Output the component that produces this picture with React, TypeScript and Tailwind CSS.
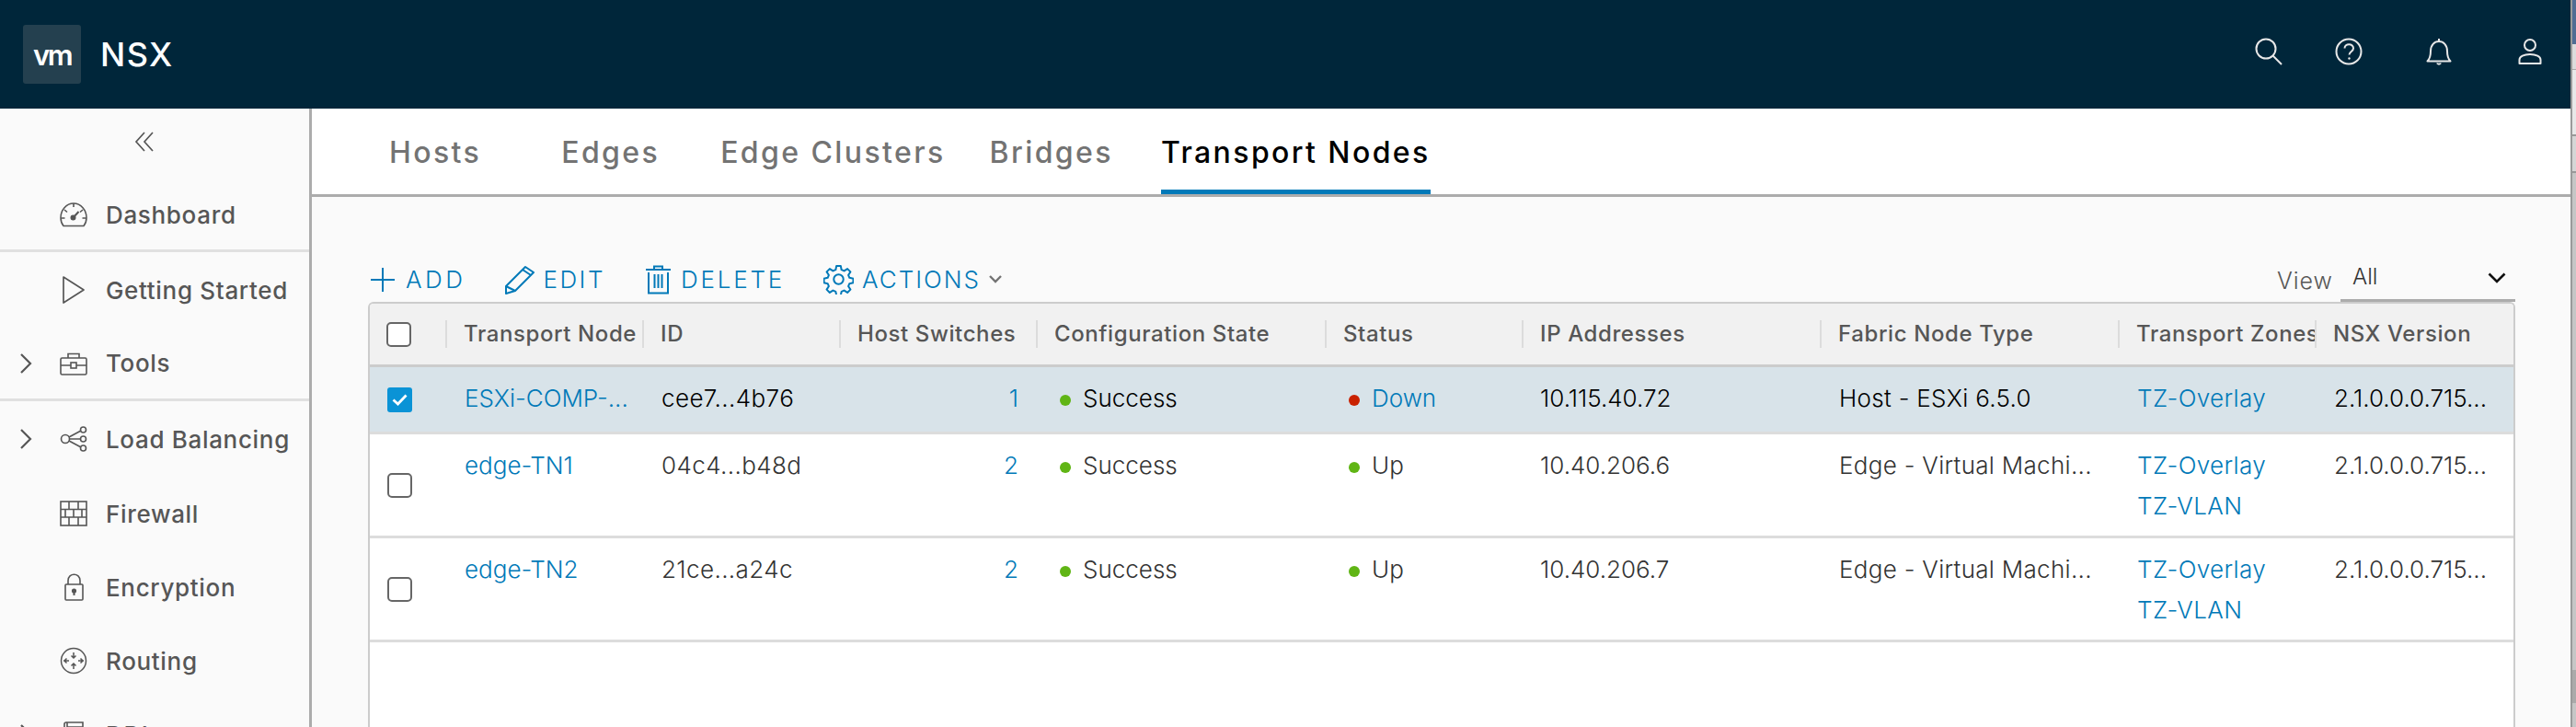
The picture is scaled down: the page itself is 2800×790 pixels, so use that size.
import React from 'react';

const gridCols = 'grid grid-cols-[82px_214px_214px_214px_314px_214px_324px_324px_214px_1fr]';

function Gauge() {
  return (
    <svg width="30" height="28" viewBox="0 0 30 28" fill="none" stroke="#565656" strokeWidth="1.6">
      <path d="M4 26.5C2 24 1 21 1 17.5 1 9.5 7 2 15 2s14 7.500 14 15.500c0 3.500-1 6.500-3 9z" />
      <path d="M15 2v4M5 9l3 2.500M25 9l-3 2.500M1.500 18h4M28.500 18h-4" />
      <circle cx="14.500" cy="17.500" r="2.200" fill="#565656" />
      <path d="M15 17l5.500-6" strokeWidth="2" />
    </svg>
  );
}

function Play() {
  return (
    <svg width="26" height="32" viewBox="0 0 26 32" fill="none" stroke="#565656" strokeWidth="1.700" strokeLinejoin="round">
      <path d="M2 2l22 14L2 30z" />
    </svg>
  );
}

function Toolbox() {
  return (
    <svg width="30" height="26" viewBox="0 0 30 26" fill="none" stroke="#565656" strokeWidth="1.600">
      <rect x="1" y="7" width="28" height="18" rx="1.500" />
      <path d="M9 7V2.500h12V7M1 15h11M18 15h11" />
      <rect x="12" y="12" width="6" height="6" />
    </svg>
  );
}

function Balancer() {
  return (
    <svg width="30" height="28" viewBox="0 0 30 28" fill="none" stroke="#565656" strokeWidth="1.600">
      <circle cx="25.500" cy="4" r="3" />
      <circle cx="25.500" cy="14" r="3" />
      <circle cx="25.500" cy="24" r="3" />
      <circle cx="6" cy="14" r="4.500" />
      <path d="M10 12l13-7M10.500 14h12M10 16l13 7" />
    </svg>
  );
}

function Wall() {
  return (
    <svg width="30" height="28" viewBox="0 0 30 28" fill="none" stroke="#565656" strokeWidth="1.600">
      <rect x="1" y="1" width="28" height="26" />
      <path d="M1 9.500h28M1 18h28M10 1v8.500M20 1v8.500M6 9.500V18M15 9.500V18M24 9.500V18M10 18v9M20 18v9" />
    </svg>
  );
}

function Lock() {
  return (
    <svg width="24" height="30" viewBox="0 0 24 30" fill="none" stroke="#565656" strokeWidth="1.600">
      <rect x="3" y="12" width="19" height="17" rx="1" />
      <path d="M6 12V8c0-9 13-9 13 0v4" />
      <circle cx="12.500" cy="19" r="1.800" fill="#565656" />
      <path d="M12.500 20v4" strokeWidth="2" />
    </svg>
  );
}

function RouterIcon() {
  return (
    <svg width="30" height="30" viewBox="0 0 30 30" fill="none" stroke="#565656" strokeWidth="1.500">
      <circle cx="15" cy="15" r="13.500" />
      <path d="M15 6v6M12.500 9.500l2.500 2.500 2.500-2.500M15 24v-6M12.500 20.500l2.500-2.500 2.500 2.500M4 15h6M7.500 12.500L5 15l2.500 2.500M26 15h-6M22.500 12.500L25 15l-2.500 2.500" />
    </svg>
  );
}

function Scroll() {
  return (
    <svg width="24" height="28" viewBox="0 0 24 28" fill="none" stroke="#565656" strokeWidth="1.600">
      <path d="M2 7V3c0-1 1-2 2-2h18v5M5 1v24h17V6H5" />
    </svg>
  );
}

function Caret() {
  return (
    <svg width="14" height="24" viewBox="0 0 14 24" fill="none" stroke="#565656" strokeWidth="2.200">
      <path d="M2 2l10 10L2 22" />
    </svg>
  );
}

function NavItem({ label, icon, caret, className }: { label: string; icon: React.ReactNode; caret?: boolean; className: string }) {
  return (
    <div className={`flex shrink-0 items-center ${className}`}>
      <div className="flex w-[62px] shrink-0 justify-center pr-[6px]">{caret && <Caret />}</div>
      <div className="flex w-[36px] shrink-0 justify-center">{icon}</div>
      <span className="ml-[17px] whitespace-nowrap text-[26px] font-medium tracking-[0.67px] text-[#565656]">{label}</span>
    </div>
  );
}

function Sidebar() {
  return (
    <aside className="flex w-[339px] shrink-0 flex-col overflow-hidden border-r-[3px] border-[#acacac] bg-[#fafafa]">
      <div className="flex h-[77px] shrink-0 justify-center pt-[25px]">
        <svg className="mr-[22px]" width="22" height="22" viewBox="0 0 22 22" fill="none" stroke="#565656" strokeWidth="1.700">
          <path d="M11 1L2 11l9 10M20 1l-9 10 9 10" />
        </svg>
      </div>
      <NavItem label="Dashboard" icon={<Gauge />} className="h-[79px] border-b-[3px] border-[#e0e0e0]" />
      <NavItem label="Getting Started" icon={<Play />} className="h-[82px]" />
      <NavItem label="Tools" icon={<Toolbox />} caret className="h-[80px] border-b-[3px] border-[#e0e0e0]" />
      <NavItem label="Load Balancing" icon={<Balancer />} caret className="h-[82px]" />
      <NavItem label="Firewall" icon={<Wall />} className="h-[80px]" />
      <NavItem label="Encryption" icon={<Lock />} className="h-[80px]" />
      <NavItem label="Routing" icon={<RouterIcon />} className="h-[80px]" />
      <NavItem label="DDI" icon={<Scroll />} caret className="h-[80px]" />
    </aside>
  );
}

function TopBar() {
  return (
    <header className="flex h-[118px] shrink-0 items-center bg-[#00263a] pl-[25px] pr-[31px] text-[#e8e8e8]">
      <div className="flex h-[64px] w-[63px] items-center justify-center rounded-[3px] bg-[#24404f]">
        <span className="text-[31px] font-semibold leading-none tracking-[-2.5px] text-white">vm</span>
      </div>
      <span className="ml-[21px] text-[36px] font-medium tracking-[1.500px] text-white">NSX</span>
      <div className="mb-[6px] ml-auto flex items-center">
        <svg width="30" height="30" viewBox="0 0 30 30" fill="none" stroke="#e8e8e8" strokeWidth="2">
          <circle cx="12" cy="12" r="10.500" />
          <path d="M19.500 19.500L29 29" />
        </svg>
        <svg className="ml-[57px]" width="30" height="30" viewBox="0 0 30 30" fill="none" stroke="#e8e8e8" strokeWidth="2">
          <circle cx="15" cy="15" r="13.500" />
          <path d="M10.500 11.500c0-6 9.500-5.500 9.500 0 0 3.500-4.500 3.500-4.500 7" />
          <circle cx="15.500" cy="22.500" r="1.200" fill="#e8e8e8" stroke="none" />
        </svg>
        <svg className="ml-[69px]" width="28" height="30" viewBox="0 0 28 30" fill="none" stroke="#e8e8e8" strokeWidth="2">
          <path d="M1.500 25.500c3.500-3.500 3.500-7 3.500-11C5 8 9 4 14 4s9 4 9 10.500c0 4 0 7.500 3.500 11z" strokeLinejoin="round" />
          <path d="M14 1v3M12 27.500c.5 1.500 3.500 1.500 4 0" />
        </svg>
        <svg className="ml-[72px]" width="26" height="30" viewBox="0 0 26 30" fill="none" stroke="#e8e8e8" strokeWidth="2">
          <circle cx="13" cy="8" r="6" />
          <path d="M1.500 28v-4c0-3.500 5-6 11.500-6s11.500 2.500 11.500 6v4z" strokeLinejoin="round" />
        </svg>
      </div>
    </header>
  );
}

function Tabs() {
  const tabClass = 'whitespace-nowrap pt-[3px] text-[32px] font-medium tracking-[2.400px] text-[#737373]';
  return (
    <nav className="flex h-[96px] shrink-0 items-center border-b-[3px] border-[#acacac] bg-white pl-[84px]">
      <span className={tabClass}>Hosts</span>
      <span className={`ml-[87px] ${tabClass}`}>Edges</span>
      <span className={`ml-[66px] ${tabClass}`}>Edge Clusters</span>
      <span className={`ml-[48px] ${tabClass}`}>Bridges</span>
      <span className="ml-[52px] flex h-full items-center whitespace-nowrap border-b-[5px] border-[#0079b8] pt-[8px] text-[32px] font-medium tracking-[2.400px] text-black">
        Transport Nodes
      </span>
    </nav>
  );
}

function Toolbar() {
  const actionClass = 'flex items-center whitespace-nowrap text-[26px] font-light text-[#0079b8]';
  return (
    <div className="flex h-[114px] shrink-0 items-end pr-[60px]">
      <div className="flex flex-1 items-center pb-[5px] pl-[63px]">
        <div className={`${actionClass} tracking-[3.500px]`}>
          <svg className="mr-[11px]" width="28" height="28" viewBox="0 0 28 28" stroke="#0079b8" strokeWidth="2">
            <path d="M14 1v26M1 14h26" />
          </svg>
          ADD
        </div>
        <div className={`ml-[42px] ${actionClass} tracking-[2.500px]`}>
          <svg className="mr-[8px]" width="34" height="32" viewBox="0 0 34 32" fill="none" stroke="#0079b8" strokeWidth="2">
            <path d="M2 23L23 2l9 6-20 20-10 3zM20 5l9 6M2 23l10 5" strokeLinejoin="round" />
          </svg>
          EDIT
        </div>
        <div className={`ml-[43px] ${actionClass} tracking-[2.800px]`}>
          <svg className="mr-[10px]" width="29" height="32" viewBox="0 0 29 32" fill="none" stroke="#0079b8" strokeWidth="2">
            <path d="M1 5h27M10 5V1.500h9V5M4 8v22.500h21V8M10.500 10v15M14.500 10v15M18.500 10v15" />
          </svg>
          DELETE
        </div>
        <div className={`ml-[42px] ${actionClass} tracking-[2px]`}>
          <svg className="mr-[9px]" width="33" height="33" viewBox="0 0 24 24" fill="none" stroke="#0079b8" strokeWidth="1.450">
            <circle cx="12" cy="12" r="3.800" />
            <path d="M10.300 1.500h3.400l.6 3 2.100.9 2.600-1.700 2.400 2.400-1.700 2.600.9 2.100 3 .6v3.400l-3 .6-.9 2.100 1.700 2.600-2.400 2.400-2.600-1.700-2.100.9-.6 3h-3.400l-.6-3-2.100-.9-2.600 1.700-2.400-2.400 1.700-2.600-.9-2.100-3-.6v-3.400l3-.6.9-2.100-1.700-2.600 2.400-2.400 2.600 1.700 2.100-.9z" strokeLinejoin="round" />
          </svg>
          ACTIONS
          <svg className="ml-[9px]" width="14" height="9" viewBox="0 0 14 9" fill="none" stroke="#737373" strokeWidth="2.400">
            <path d="M1 1l6 6 6-6" />
          </svg>
        </div>
      </div>
      <div className="flex items-center">
        <span className="mr-[8px] pb-[2px] text-[25px] font-light tracking-[1px] text-[#565656]">View</span>
        <div className="flex h-[42px] w-[190px] items-start justify-between border-b-[3px] border-[#acacac] pl-[13px] pr-[10px]">
          <span className="text-[24px] font-light leading-[30px] text-[#333]">All</span>
          <svg className="mt-[10px]" width="20" height="13" viewBox="0 0 20 13" fill="none" stroke="#111" strokeWidth="2.600">
            <path d="M1.500 1.500L10 10l8.500-8.500" />
          </svg>
        </div>
      </div>
    </div>
  );
}

function HeaderCell({ label }: { label: string }) {
  return (
    <div className="flex h-[30px] items-center overflow-hidden whitespace-nowrap border-l-2 border-[#dcdcdc] pl-[18px] text-[24px] font-medium tracking-[0.6px] text-[#565656]">
      {label}
    </div>
  );
}

function CheckBox({ checked }: { checked?: boolean }) {
  if (checked) {
    return (
      <div className="flex h-[27px] w-[27px] items-center justify-center rounded-[3px] bg-[#0a93d6]">
        <svg width="17" height="13" viewBox="0 0 17 13" fill="none" stroke="white" strokeWidth="2.800">
          <path d="M1.500 6.500l5 4.500 9-9.500" />
        </svg>
      </div>
    );
  }
  return <div className="h-[27px] w-[27px] rounded-[5px] border-2 border-[#666] bg-white" />;
}

function Dot({ color, label, link, dark }: { color: string; label: string; link?: boolean; dark?: boolean }) {
  return (
    <div className="flex items-center">
      <span className={`mt-[3px] h-[12px] w-[12px] shrink-0 rounded-full ${color}`} />
      <span className={`ml-[13px] ${link ? 'text-[#0079b8]' : dark ? 'text-black' : ''}`}>{label}</span>
    </div>
  );
}

type Row = {
  name: string;
  id: string;
  switches: string;
  status: string;
  ip: string;
  type: string;
  zones: string[];
  selected?: boolean;
};

const rows: Row[] = [
  { name: 'ESXi-COMP-...', id: 'cee7...4b76', switches: '1', status: 'Down', ip: '10.115.40.72', type: 'Host - ESXi 6.5.0', zones: ['TZ-Overlay'], selected: true },
  { name: 'edge-TN1', id: '04c4...b48d', switches: '2', status: 'Up', ip: '10.40.206.6', type: 'Edge - Virtual Machi...', zones: ['TZ-Overlay', 'TZ-VLAN'] },
  { name: 'edge-TN2', id: '21ce...a24c', switches: '2', status: 'Up', ip: '10.40.206.7', type: 'Edge - Virtual Machi...', zones: ['TZ-Overlay', 'TZ-VLAN'] },
];

function TableRow({ row }: { row: Row }) {
  const textTone = row.selected ? 'text-black' : 'text-[#333]';
  return (
    <div className={`${gridCols} border-b-[3px] border-[#dcdcdc] text-[26px] font-light leading-[30px] ${textTone} ${row.selected ? 'h-[73px] bg-[#d8e3e9]' : 'h-[113px]'}`}>
      <div className={`flex pl-[19px] ${row.selected ? 'items-center' : 'pt-[42px]'}`}>
        <CheckBox checked={row.selected} />
      </div>
      <div className="whitespace-nowrap pl-[21px] pt-[19px] text-[#0079b8]">{row.name}</div>
      <div className="whitespace-nowrap pl-[21px] pt-[19px] tracking-[0.4px]">{row.id}</div>
      <div className="pr-[19px] pt-[19px] text-right text-[#0079b8]">{row.switches}</div>
      <div className="pl-[26px] pt-[19px]"><Dot color="bg-[#60b515]" label="Success" dark={row.selected} /></div>
      <div className="pl-[26px] pt-[19px]"><Dot color={row.status === 'Down' ? 'bg-[#c92100]' : 'bg-[#60b515]'} label={row.status} link={row.status === 'Down'} /></div>
      <div className="whitespace-nowrap pl-[20px] pt-[19px]">{row.ip}</div>
      <div className="whitespace-nowrap pl-[21px] pt-[19px] tracking-[0.3px]">{row.type}</div>
      <div className="pl-[21px] pt-[19px] tracking-[0.4px] text-[#0079b8]">
        {row.zones.map((z) => (
          <div key={z} className="mb-[14px]">{z}</div>
        ))}
      </div>
      <div className="whitespace-nowrap pl-[21px] pt-[19px]">2.1.0.0.0.715...</div>
    </div>
  );
}

function Table() {
  return (
    <div className="flex-1 overflow-hidden rounded-t-[6px] border-x-2 border-t-2 border-[#cccccc] bg-white">
      <div className={`${gridCols} h-[69px] items-center border-b-[3px] border-[#cccccc] bg-[#f1f1f1]`}>
        <div className="pl-[18px]"><CheckBox /></div>
        <HeaderCell label="Transport Node" />
        <HeaderCell label="ID" />
        <HeaderCell label="Host Switches" />
        <HeaderCell label="Configuration State" />
        <HeaderCell label="Status" />
        <HeaderCell label="IP Addresses" />
        <HeaderCell label="Fabric Node Type" />
        <HeaderCell label="Transport Zones" />
        <HeaderCell label="NSX Version" />
      </div>
      {rows.map((row) => (
        <TableRow key={row.name} row={row} />
      ))}
    </div>
  );
}

function NeighbourWindow() {
  return (
    <div className="flex h-full flex-1 flex-col border-l-2 border-[#9a9a9a] bg-[#c6c6c6]">
      <div className="h-[48px] bg-[#4f6d93]" />
      <div className="h-[28px] border-b border-[#aaa] bg-[#dcdcdc]" />
      <div className="h-[72px] border-b-2 border-[#999] bg-[#e8e8e8]" />
      <div className="h-[40px] border-b-2 border-[#999] bg-[#d6d6d6]" />
      <div className="flex-1" />
      <div className="h-[36px] bg-[#aaaaaa]" />
      <div className="h-[26px]" />
    </div>
  );
}

export default function App() {
  return (
    <div className="flex h-[790px] w-[2800px] overflow-hidden bg-white font-['Inter',sans-serif]">
      <div className="flex w-[2794px] shrink-0 flex-col">
        <TopBar />
        <div className="flex min-h-0 flex-1">
          <Sidebar />
          <main className="flex min-w-0 flex-1 flex-col bg-[#fafafa]">
            <Tabs />
            <Toolbar />
            <div className="flex min-h-0 flex-1 pl-[61px] pr-[60px]">
              <Table />
            </div>
          </main>
        </div>
      </div>
      <NeighbourWindow />
    </div>
  );
}
